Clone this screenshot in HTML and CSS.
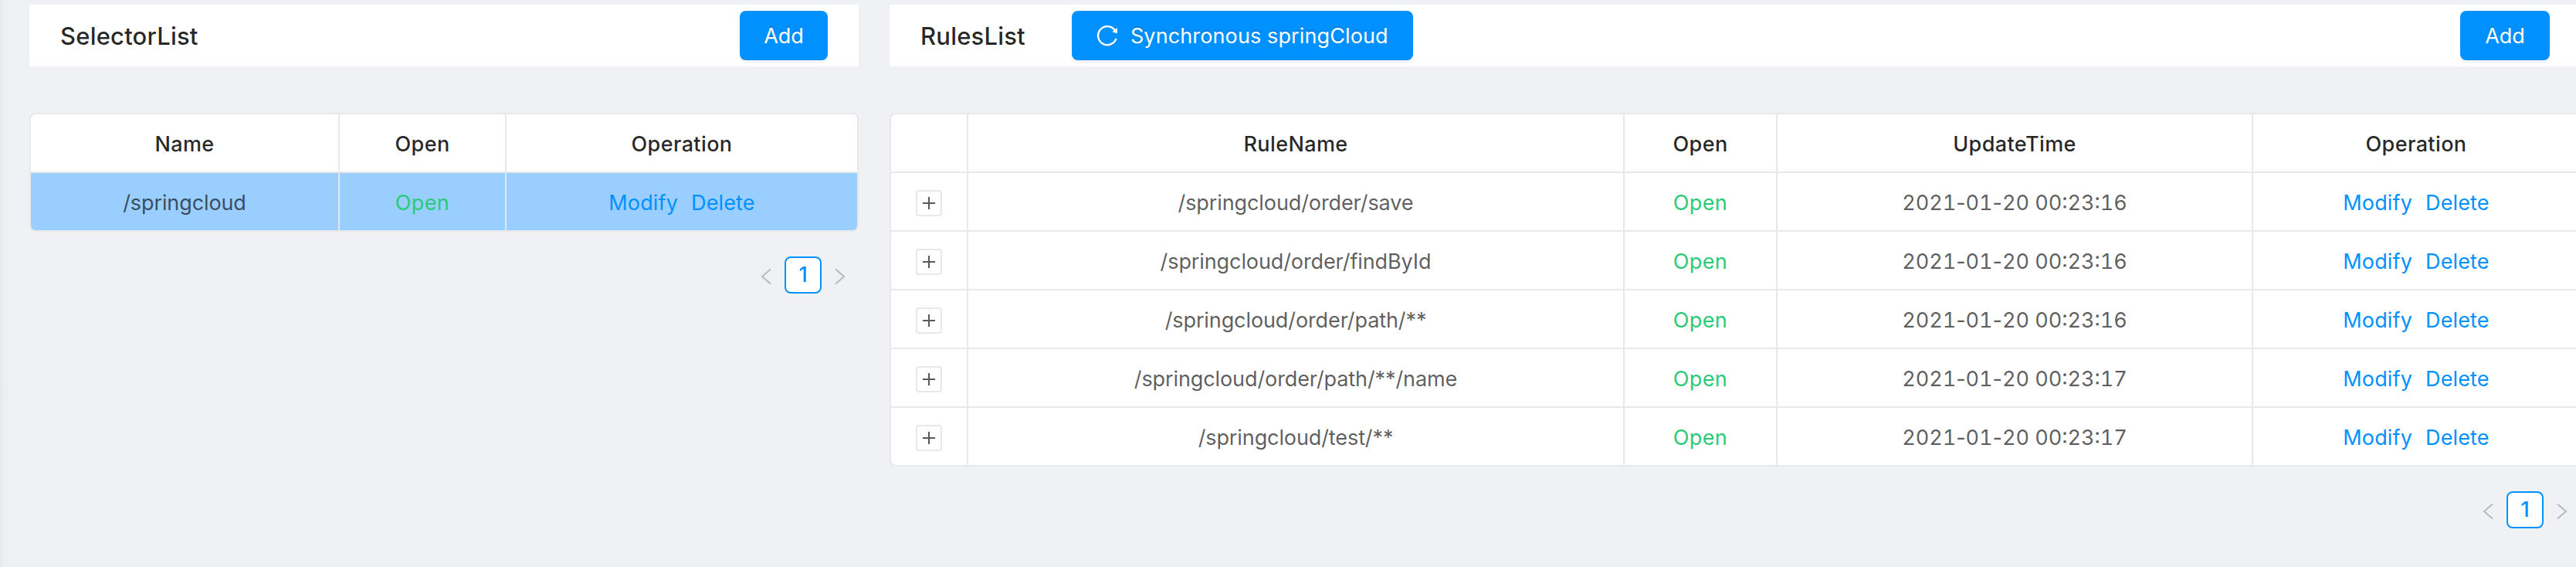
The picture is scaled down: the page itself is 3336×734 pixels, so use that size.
FILE: index.html
```
<!DOCTYPE html>
<html lang="en">
<head>
<meta charset="utf-8">
<title>springCloud</title>
<link rel="stylesheet" href="styles.css">
</head>
<body>
<svg class="sprite" aria-hidden="true">
  <symbol id="left" viewBox="0 0 14 22"><path d="M13 1.5 2 11l11 9.5"/></symbol>
  <symbol id="right" viewBox="0 0 14 22"><path d="M1 1.5 12 11 1 20.500"/></symbol>
</svg>
<main class="page">
  <section class="panel selectors">
    <header class="bar">
      <h2 class="title">SelectorList</h2>
      <button class="btn add">Add</button>
    </header>
    <div class="table">
      <div class="row head"><div><span>Name</span></div><div><span>Open</span></div><div><span>Operation</span></div></div>
      <div class="row selected"><div><span class="path">/springcloud</span></div><div><span class="open">Open</span></div><div class="ops"><a>Modify</a><a>Delete</a></div></div>
    </div>
    <nav class="pager"><svg class="arrow"><use href="#left"/></svg><span class="num">1</span><svg class="arrow"><use href="#right"/></svg></nav>
  </section>
  <section class="panel rules">
    <header class="bar">
      <h2 class="title">RulesList</h2>
      <button class="btn sync"><svg class="reload" viewBox="0 0 28 28"><path d="M25.400 17.900A12 12 0 1 1 23.800 7.200"/><path class="tip" d="M26.900 3.900v7.400l-6.600-2z"/></svg><span>Synchronous springCloud</span></button>
      <button class="btn add">Add</button>
    </header>
    <div class="table">
      <div class="row head"><div></div><div><span>RuleName</span></div><div><span>Open</span></div><div><span>UpdateTime</span></div><div><span>Operation</span></div></div>
      <div class="row"><div><i class="expand"></i></div><div><span class="path">/springcloud/order/save</span></div><div><span class="open">Open</span></div><div><span class="date">2021<span class="dash">-</span>01<span class="dash">-</span>20 00:23:16</span></div><div class="ops"><a>Modify</a><a>Delete</a></div></div>
      <div class="row"><div><i class="expand"></i></div><div><span class="path">/springcloud/order/findById</span></div><div><span class="open">Open</span></div><div><span class="date">2021<span class="dash">-</span>01<span class="dash">-</span>20 00:23:16</span></div><div class="ops"><a>Modify</a><a>Delete</a></div></div>
      <div class="row"><div><i class="expand"></i></div><div><span class="path">/springcloud/order/path/**</span></div><div><span class="open">Open</span></div><div><span class="date">2021<span class="dash">-</span>01<span class="dash">-</span>20 00:23:16</span></div><div class="ops"><a>Modify</a><a>Delete</a></div></div>
      <div class="row"><div><i class="expand"></i></div><div><span class="path">/springcloud/order/path/**/name</span></div><div><span class="open">Open</span></div><div><span class="date">2021<span class="dash">-</span>01<span class="dash">-</span>20 00:23:17</span></div><div class="ops"><a>Modify</a><a>Delete</a></div></div>
      <div class="row"><div><i class="expand"></i></div><div><span class="path">/springcloud/test/**</span></div><div><span class="open">Open</span></div><div><span class="date">2021<span class="dash">-</span>01<span class="dash">-</span>20 00:23:17</span></div><div class="ops"><a>Modify</a><a>Delete</a></div></div>
    </div>
    <nav class="pager"><svg class="arrow"><use href="#left"/></svg><span class="num">1</span><svg class="arrow"><use href="#right"/></svg></nav>
  </section>
</main>
</body>
</html>
```
FILE: styles.css
```
* { box-sizing: border-box; }
body {
  margin: 0;
  height: 734px;
  overflow: hidden;
  background: linear-gradient(90deg, #e5e7eb 0, #edeff3 6px, #f0f1f5 14px);
  font: 27px/42px Inter, "Liberation Sans", sans-serif;
  color: rgba(0, 0, 0, .65);
}
.sprite { display: none; }
.page {
  display: grid;
  grid-template-columns: 1074px 2190px;
  gap: 40px;
  width: 3342px;
  padding: 6px 0 0 38px;
}
.bar {
  display: flex;
  align-items: center;
  height: 80px;
  padding: 0 40px;
  background: #fff;
}
.title {
  margin: 0;
  padding-top: 1px;
  font-size: 31px;
  font-weight: 500;
  letter-spacing: .2px;
  color: rgba(0, 0, 0, .85);
}
.btn {
  display: flex;
  align-items: center;
  justify-content: center;
  height: 64px;
  padding: 1px 0 0;
  border: 0;
  border-radius: 8px;
  background: #0091ff;
  box-shadow: 0 4px 0 rgba(0, 0, 0, .045);
  color: #fff;
  font: inherit;
  text-shadow: 0 -2px 0 rgba(0, 0, 0, .12);
}
.add { width: 114px; margin-left: auto; }
.rules .add { width: 116px; }
.sync { width: 442px; gap: 16px; margin-left: 60px; letter-spacing: .12px; }
.reload { width: 28px; height: 28px; margin-top: -1px; fill: none; stroke: #fff; stroke-width: 2.400; }
.reload .tip { fill: #fff; stroke: none; }
.table {
  margin-top: 60px;
  border: 2px solid #e8e8e8;
  border-radius: 8px;
  background: #fff;
  overflow: hidden;
}
.row { display: grid; height: 74px; }
.row + .row { height: 76px; border-top: 2px solid #e8e8e8; }
.selectors .row { grid-template-columns: 400px 216px 1fr; }
.rules .row { grid-template-columns: 100px 850px 198px 616px 1fr; }
.row > div { display: flex; align-items: center; justify-content: center; padding-top: 3px; }
.row > div:not(:last-child) { border-right: 2px solid #e8e8e8; }
.head { font-weight: 500; letter-spacing: .4px; color: rgba(0, 0, 0, .85); }
.selected { background: #99ceff; }
.path { letter-spacing: -.1px; }
.date { font-variant-numeric: tabular-nums; }
.dash { font-variant-numeric: normal; }
.open { color: #29cb7a; letter-spacing: .4px; }
.ops { gap: 17px; color: #0091ff; letter-spacing: .15px; }
.expand {
  width: 34px;
  height: 34px;
  margin-top: 1px;
  border: 2px solid #e8e8e8;
  border-radius: 4px;
  background:
    linear-gradient(#595959, #595959) center / 16px 2px no-repeat,
    linear-gradient(#595959, #595959) center / 2px 16px no-repeat,
    #fff;
}
.pager {
  display: flex;
  align-items: center;
  justify-content: flex-end;
  margin-top: 32px;
}
.num {
  width: 48px;
  height: 48px;
  border: 2px solid #0091ff;
  border-radius: 8px;
  background: #fff;
  color: #0091ff;
  font-weight: 500;
  line-height: 44px;
  text-align: center;
}
.arrow { width: 14px; height: 22px; margin: 4px 17px 0; fill: none; stroke: #b8b9bc; stroke-width: 2; }
```
